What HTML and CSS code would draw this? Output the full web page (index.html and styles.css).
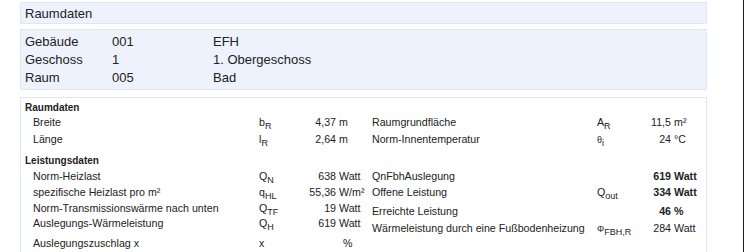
FILE: index.html
```html
<!DOCTYPE html>
<html lang="de">
<head>
<meta charset="utf-8">
<title>Raumdaten</title>
<link rel="stylesheet" href="styles.css">
</head>
<body>
<div class="page">
  <div class="titlebar">Raumdaten</div>

  <div class="infobox">
    <span>Gebäude</span><span>001</span><span>EFH</span>
    <span>Geschoss</span><span>1</span><span>1. Obergeschoss</span>
    <span>Raum</span><span>005</span><span>Bad</span>
  </div>

  <div class="databox">
    <div class="sec-title">Raumdaten</div>
    <div class="cols">
      <div class="col col-left">
        <div class="row h167"><span>Breite</span><span class="sym">b<sub>R</sub></span><span class="num">4,37</span><span class="unit">m</span></div>
        <div class="row h167"><span>Länge</span><span class="sym">l<sub>R</sub></span><span class="num">2,64</span><span class="unit">m</span></div>
      </div>
      <div class="col col-right">
        <div class="row h167"><span>Raumgrundfläche</span><span class="sym">A<sub>R</sub></span><span class="num">11,5</span><span class="unit">m²</span></div>
        <div class="row h167"><span>Norm-Innentemperatur</span><span class="sym"><span class="greek">θ</span><sub>i</sub></span><span class="num">24</span><span class="unit">°C</span></div>
      </div>
    </div>

    <div class="sec-title sec-gap">Leistungsdaten</div>
    <div class="cols">
      <div class="col col-left">
        <div class="row h16"><span>Norm-Heizlast</span><span class="sym">Q<sub>N</sub></span><span class="num">638</span><span class="unit">Watt</span></div>
        <div class="row h157"><span>spezifische Heizlast pro m²</span><span class="sym">q<sub>HL</sub></span><span class="num">55,36</span><span class="unit">W/m²</span></div>
        <div class="row h153"><span>Norm-Transmissionswärme nach unten</span><span class="sym">Q<sub>TF</sub></span><span class="num">19</span><span class="unit">Watt</span></div>
        <div class="row h20"><span>Auslegungs-Wärmeleistung</span><span class="sym">Q<sub>H</sub></span><span class="num">619</span><span class="unit">Watt</span></div>
        <div class="row h16"><span>Auslegungszuschlag x</span><span class="sym">x</span><span class="num"></span><span class="unit unit-pct">%</span></div>
      </div>
      <div class="col col-right">
        <div class="row h16 strong"><span>QnFbhAuslegung</span><span class="sym"></span><span class="num">619</span><span class="unit">Watt</span></div>
        <div class="row h19 strong"><span>Offene Leistung</span><span class="sym">Q<sub>out</sub></span><span class="num">334</span><span class="unit">Watt</span></div>
        <div class="row h167 strong"><span>Erreichte Leistung</span><span class="sym"></span><span class="num">46</span><span class="unit">%</span></div>
        <div class="row h16"><span>Wärmeleistung durch eine Fußbodenheizung</span><span class="sym"><span class="greek">Φ</span><sub>FBH,R</sub></span><span class="num">284</span><span class="unit">Watt</span></div>
      </div>
    </div>
  </div>
</div>
</body>
</html>
```

FILE: styles.css
```css
html, body {
  margin: 0;
  padding: 0;
  background: #ffffff;
}

body {
  font-family: "Liberation Sans", Arial, sans-serif;
  color: #222222;
}

.page {
  width: 744px;
  min-height: 100vh;
  box-sizing: border-box;
  border-right: 1px solid #1e1e1e;
  padding: 2px 0 0 20px;
}

.titlebar {
  width: 687px;
  box-sizing: border-box;
  background: #eef2fd;
  border: 1px solid #dfe7f6;
  font-size: 13px;
  line-height: 15px;
  padding: 3px 4px 2px;
}

.infobox {
  margin-top: 5px;
  width: 687px;
  box-sizing: border-box;
  background: #eef2fd;
  border: 1px solid #dfe7f6;
  font-size: 13px;
  line-height: 18px;
  padding: 3px 4px 2px;
  display: grid;
  grid-template-columns: 87px 101px auto;
}

.databox {
  margin-top: 7px;
  width: 687px;
  box-sizing: border-box;
  border: 1px solid #dfe7f6;
  padding: 4px 4px 20px;
  font-size: 10.67px;
  line-height: 12px;
  color: #222222;
}

.sec-title {
  font-weight: bold;
  font-size: 10px;
  height: 14px;
}

.sec-gap {
  margin-top: 6px;
  height: 14.8px;
}

.cols {
  display: flex;
}

.col-left {
  width: 347px;
}

.row {
  display: grid;
  white-space: nowrap;
  align-items: start;
}

.col-left .row {
  padding-left: 8px;
  grid-template-columns: 226px 45px 32px auto;
}

.col-right .row {
  grid-template-columns: 225px 45px 29px auto;
}

.num {
  text-align: right;
}

.unit {
  padding-left: 3px;
}

.unit-pct {
  padding-left: 7px;
}

.strong .num,
.strong .unit {
  font-weight: bold;
}

.sym sub {
  font-size: 9px;
  line-height: 0;
  vertical-align: -3px;
}

.greek {
  font-size: 9px;
}

.h16 { height: 16px; }
.h157 { height: 15.7px; }
.h153 { height: 15.3px; }
.h167 { height: 16.7px; }
.h19 { height: 19px; }
.h20 { height: 20px; }
```
